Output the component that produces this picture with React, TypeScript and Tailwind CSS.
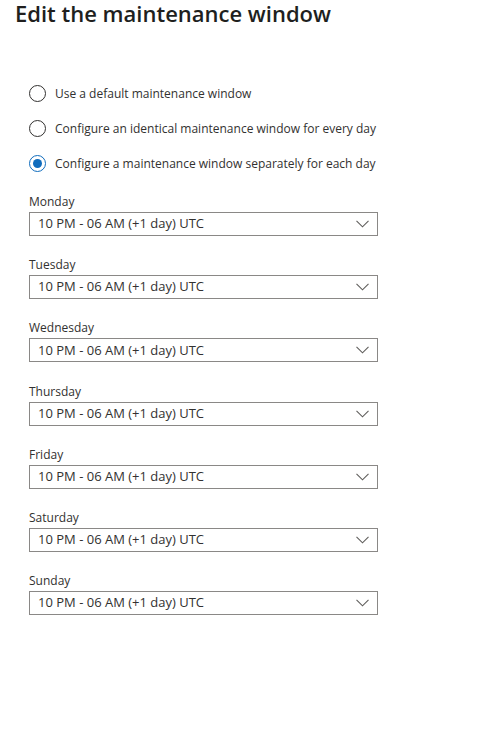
const DAYS = ['Monday', 'Tuesday', 'Wednesday', 'Thursday', 'Friday', 'Saturday', 'Sunday'];

const OPTIONS = [
  { label: 'Use a default maintenance window', checked: false },
  { label: 'Configure an identical maintenance window for every day', checked: false },
  { label: 'Configure a maintenance window separately for each day', checked: true },
];

function Radio({ checked }: { checked: boolean }) {
  return (
    <span
      className={`flex h-[17px] w-[17px] shrink-0 items-center justify-center rounded-full border ${
        checked ? 'border-[#0f6cbd]' : 'border-[#323130]'
      } bg-white`}
    >
      {checked && <span className="h-[9px] w-[9px] rounded-full bg-[#0f6cbd]" />}
    </span>
  );
}

// Fluent-style thin chevron
function Chevron() {
  return (
    <svg width="13" height="8" viewBox="0 0 13 8" fill="none" className="shrink-0">
      <path d="M0.5 0.8 L6.5 6.8 L12.5 0.8" stroke="#605e5c" strokeWidth="1.1" />
    </svg>
  );
}

export default function App() {
  return (
    <div
      className="min-h-[750px] w-[486px] bg-white text-[#323130]"
      style={{ fontFamily: '"Open Sans", "Noto Sans", sans-serif' }}
    >
      <h1 className="pl-[15px] text-[22px] font-semibold leading-[26px] text-[#201f1e]">
        Edit the maintenance window
      </h1>

      <div className="mt-[50px] pl-[29px]">
        {/* Radio options */}
        <div className="flex flex-col">
          {OPTIONS.map((opt) => (
            <label key={opt.label} className="flex h-[35px] items-center gap-[9px] text-[12px]">
              <Radio checked={opt.checked} />
              <span>{opt.label}</span>
            </label>
          ))}
        </div>

        {/* Per-day selectors */}
        <div className="mt-[12px] flex flex-col gap-[20.2px]">
          {DAYS.map((day) => (
            <div key={day}>
              <div className="h-[19px] text-[12px] leading-[17px]">{day}</div>
              <div className="flex h-[24px] w-[349px] items-center justify-between border border-[#8a8886] pl-[8px] pr-[8px] text-[13px]">
                <span>10 PM - 06 AM (+1 day) UTC</span>
                <Chevron />
              </div>
            </div>
          ))}
        </div>
      </div>
    </div>
  );
}
